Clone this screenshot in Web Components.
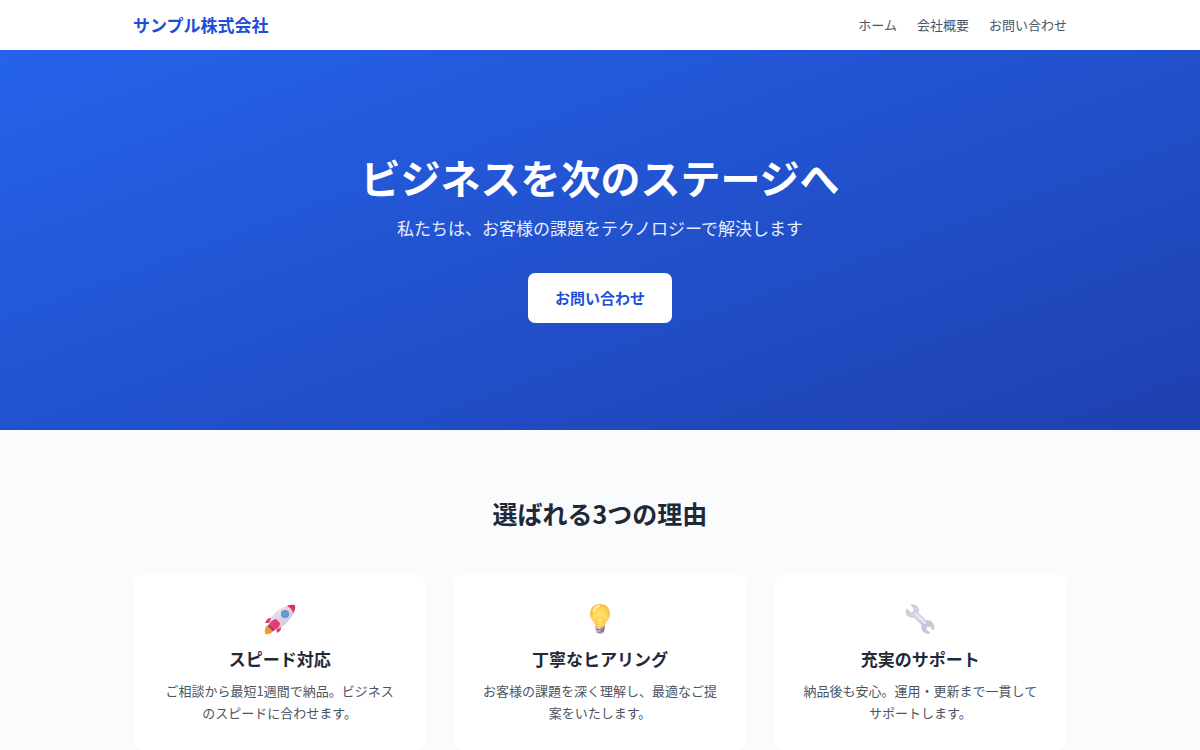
<!DOCTYPE html>
<html lang="ja">
<head>
<meta charset="utf-8">
<meta name="viewport" content="width=device-width, initial-scale=1">
<title>サンプル株式会社</title>
<style>
html { --ink: #1f2937; --muted: #4b5563; --brand: #1d4ed8; --page-width: 1000px; --gutter: 33px; }
body { margin: 0; background: #f9fbfd; color: var(--ink); font-family: "Noto Sans CJK JP", sans-serif; font-size: 13px; line-height: 22px; }
</style>
</head>
<body>
<site-header>
  サンプル株式会社
  <nav-link slot="nav" href="#home">ホーム</nav-link>
  <nav-link slot="nav" href="#about">会社概要</nav-link>
  <nav-link slot="nav" href="#contact">お問い合わせ</nav-link>
</site-header>
<main>
  <hero-banner id="home">
    <span slot="title">ビジネスを次のステージへ</span>
    <span slot="lead">私たちは、お客様の課題をテクノロジーで解決します</span>
    <span slot="action">お問い合わせ</span>
  </hero-banner>
  <feature-section id="about">
    <span slot="title">選ばれる3つの理由</span>
    <feature-card>
      <svg slot="icon" width="32" height="32" viewBox="0 0 32 32" aria-hidden="true">
        <defs>
          <linearGradient id="hull" x1="0" y1="0" x2="1" y2="1"><stop stop-color="#f5eff9"/><stop offset="1" stop-color="#c2b8d0"/></linearGradient>
          <linearGradient id="fin" x1="0" y1="0" x2="1" y2="1"><stop stop-color="#d9467c"/><stop offset="1" stop-color="#f12e70"/></linearGradient>
          <linearGradient id="flame" x1="1" y1="0" x2="0" y2="1"><stop stop-color="#e67a38"/><stop offset="1" stop-color="#f9a738"/></linearGradient>
        </defs>
        <path d="M4 22Q0 24 1 31Q7 32 10 27Z" fill="url(#flame)"/>
        <path d="M9 15Q3 14 1 20L7 20ZM17 23Q18 28 13 30L12 25Z" fill="url(#fin)"/>
        <path d="M5 21Q8 9 18 5Q25 1 31 2Q32 10 25 17Q19 25 10 27Z" fill="url(#hull)"/>
        <path d="M23 3Q27 1 31 2Q32 6 29 10Q28 5 23 3Z" fill="#e32f52"/>
        <path d="M5 21L11 27L9 28L4 23Z" fill="#584869"/>
        <path d="M5 22Q7 17 12 16L16 20Q16 25 10 27Q7 25 5 22Z" fill="url(#fin)"/>
        <circle cx="21" cy="11" r="4" fill="#7186b2"/><circle cx="21" cy="11" r="3" fill="#5f9fe0"/>
      </svg>
      <span slot="title">スピード対応</span>
      ご相談から最短1週間で納品。ビジネスのスピードに合わせます。
    </feature-card>
    <feature-card>
      <svg slot="icon" width="32" height="32" viewBox="0 0 32 32" aria-hidden="true">
        <defs>
          <radialGradient id="glass" cx=".5" cy=".55" r=".6"><stop stop-color="#ffe873"/><stop offset=".6" stop-color="#fdd458"/><stop offset="1" stop-color="#f3b63e"/></radialGradient>
          <linearGradient id="cap"><stop stop-color="#b9a4bd"/><stop offset=".4" stop-color="#dfd1e3"/><stop offset="1" stop-color="#78617f"/></linearGradient>
        </defs>
        <path d="M16 1C10 1 6 5 6 11C6 16 9 17 11 22Q11 25 16 25Q21 25 21 22C23 17 26 16 26 11C26 5 22 1 16 1Z" fill="url(#glass)"/>
        <path d="M13 22L12 16Q13 13 16 15Q19 13 20 16L19 22" fill="none" stroke="#f3b03a" stroke-width="1" opacity=".7"/>
        <path d="M10 8Q11 4 15 3" fill="none" stroke="#fff2ac" stroke-width="2" stroke-linecap="round"/>
        <path d="M11 23Q16 26 21 23L20 29Q18 31 16 31Q13 31 12 29Z" fill="url(#cap)"/>
        <path d="M12 26Q16 28 20 26M13 29Q16 30 19 28" fill="none" stroke="#79627e"/>
      </svg>
      <span slot="title">丁寧なヒアリング</span>
      お客様の課題を深く理解し、最適なご提案をいたします。
    </feature-card>
    <feature-card>
      <svg slot="icon" width="32" height="32" viewBox="0 0 32 32" aria-hidden="true">
        <defs><linearGradient id="steel" x1="0" y1="0" x2="1" y2="1"><stop stop-color="#cbc8d0"/><stop offset=".45" stop-color="#ddd8ed"/><stop offset=".7" stop-color="#cac2df"/><stop offset="1" stop-color="#d0ccd6"/></linearGradient></defs>
        <path d="M7 2Q11 1 14 5Q15 7 14 10L22 18Q27 17 29 21Q31 24 29 27L26 23L22 24L22 27L26 30Q21 31 19 28Q17 25 18 22L10 14Q6 15 3 12Q1 9 3 6L7 10L10 9L10 5Z" fill="url(#steel)" stroke="#cbc5d5" stroke-width="1" stroke-linejoin="round"/>
        <path d="M12 11L21 20" stroke="#eeeaf8" stroke-width="2" stroke-linecap="round"/>
      </svg>
      <span slot="title">充実のサポート</span>
      納品後も安心。運用・更新まで一貫してサポートします。
    </feature-card>
  </feature-section>
</main>
<script>
function define(name, markup) {
  const template = document.createElement('template');
  template.innerHTML = markup;
  customElements.define(name, class extends HTMLElement {
    constructor() {
      super();
      this.attachShadow({ mode: 'open' }).append(template.content.cloneNode(true));
    }
    connectedCallback() {
      const link = this.shadowRoot.querySelector('a[data-forward]');
      if (link) link.href = this.getAttribute('href');
    }
  });
}

define('nav-link', `
  <style>
    :host { display: block; }
    a { color: var(--muted); text-decoration: none; }
    a:hover { color: var(--brand); }
  </style>
  <a data-forward><slot></slot></a>`);

define('site-header', `
  <style>
    :host { display: block; background: #fff; }
    header { box-sizing: border-box; max-width: var(--page-width); min-height: 50px; margin: 0 auto; padding: 0 var(--gutter); display: flex; align-items: center; justify-content: space-between; }
    .brand { color: var(--brand); font-size: 17px; font-weight: 700; text-decoration: none; }
    nav { display: flex; gap: 20px; }
  </style>
  <header>
    <a class="brand" href="#home"><slot></slot></a>
    <nav><slot name="nav"></slot></nav>
  </header>`);

define('hero-banner', `
  <style>
    :host { display: block; background: linear-gradient(160deg, #2563eb, #1e40af); color: #fff; }
    section { padding: 97px 20px 107px; text-align: center; }
    h1 { margin: 0 0 7px; font-size: 40px; line-height: 60px; font-weight: 700; }
    p { margin: 0 0 32px; font-size: 17px; line-height: 27px; opacity: .9; }
    button { display: block; margin: 0 auto; padding: 14px 27px; border: 0; border-radius: 7px; background: #fff; color: var(--brand); font: 700 15px/22px "Noto Sans CJK JP", sans-serif; cursor: pointer; }
  </style>
  <section>
    <h1><slot name="title"></slot></h1>
    <p><slot name="lead"></slot></p>
    <button type="button"><slot name="action"></slot></button>
  </section>`);

define('feature-section', `
  <style>
    :host { display: block; }
    section { box-sizing: border-box; max-width: var(--page-width); margin: 0 auto; padding: 62px var(--gutter) 0; }
    h2 { margin: 0 0 40px; font-size: 25px; line-height: 42px; font-weight: 700; text-align: center; }
    .cards { display: grid; grid-template-columns: repeat(auto-fit, minmax(240px, 1fr)); gap: 27px; }
  </style>
  <section>
    <h2><slot name="title"></slot></h2>
    <div class="cards"><slot></slot></div>
  </section>`);

define('feature-card', `
  <style>
    :host { display: block; box-sizing: border-box; padding: 27px 27px 26px; border-radius: 10px; background: #fff; box-shadow: 0 1px 3px rgb(0 0 0 / 2%); text-align: center; }
    .icon { display: flex; justify-content: center; padding: 2px 0 10px; }
    h3 { margin: 0 0 8px; font-size: 17px; line-height: 27px; font-weight: 700; }
    p { margin: 0; color: var(--muted); }
  </style>
  <div class="icon"><slot name="icon"></slot></div>
  <h3><slot name="title"></slot></h3>
  <p><slot></slot></p>`);
</script>
</body>
</html>
